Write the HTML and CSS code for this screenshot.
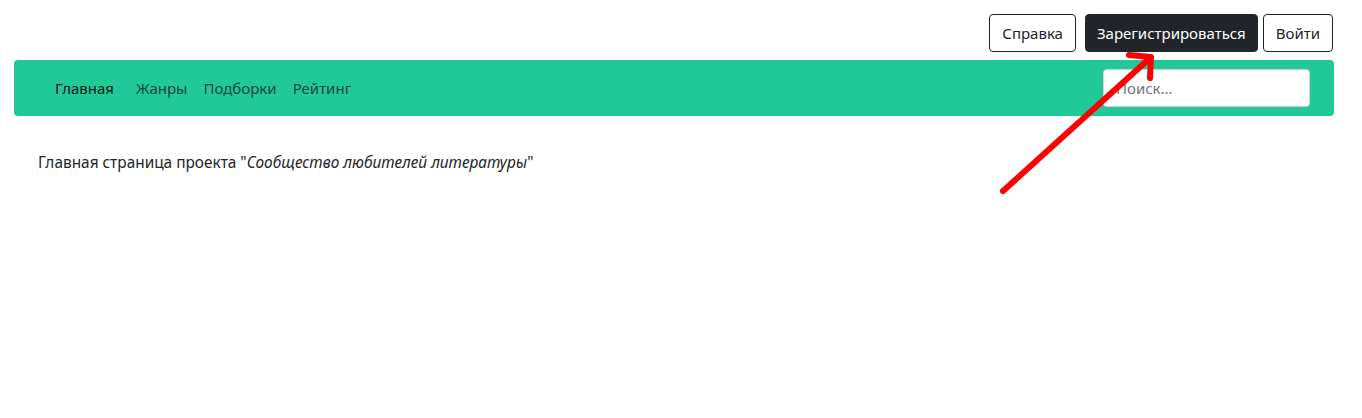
FILE: index.html
```html
<!DOCTYPE html>
<html lang="ru">
<head>
<meta charset="utf-8">
<link rel="stylesheet" href="styles.css">
</head>
<body>
<div class="page">
  <div class="topbar">
    <button class="btn btn-outline">Справка</button>
    <button class="btn btn-dark">Зарегистрироваться</button>
    <button class="btn btn-outline">Войти</button>
  </div>
  <nav class="navbar">
    <ul class="nav">
      <li><a class="nav-link active" href="#">Главная</a></li>
      <li><a class="nav-link" href="#">Жанры</a></li>
      <li><a class="nav-link" href="#">Подборки</a></li>
      <li><a class="nav-link" href="#">Рейтинг</a></li>
    </ul>
    <input class="search" type="text" placeholder="Поиск...">
  </nav>
  <p class="intro">Главная страница проекта "<em>Сообщество любителей литературы</em>"</p>
</div>
<svg class="arrow" width="1362" height="418" viewBox="0 0 1362 418">
  <g stroke="#ff0000" stroke-width="6" stroke-linecap="round" stroke-linejoin="round" fill="none">
    <line x1="1003" y1="191" x2="1150" y2="58"/>
    <polyline points="1129,55 1151,57 1150,78"/>
  </g>
</svg>
</body>
</html>
```
FILE: styles.css
```css
html, body {
  margin: 0;
  padding: 0;
  background: #fff;
  height: 100%;
}
body {
  font-family: "Noto Sans", "Open Sans", sans-serif;
  color: #212529;
  font-size: 16px;
  position: relative;
  overflow: hidden;
}
.page {
  padding: 14px 28px 0 14px;
}
.topbar {
  display: flex;
  justify-content: flex-end;
  gap: 5px;
  height: 38px;
  margin-right: 1px;
}
.btn {
  font-family: inherit;
  font-size: 15px;
  height: 38px;
  padding: 0 12px;
  border-radius: 4px;
  border: 1px solid #212529;
  cursor: pointer;
  line-height: 1;
}
.btn-outline {
  background: #fff;
  color: #212529;
}
.btn-dark {
  background: #212529;
  color: #fff;
  margin-left: 4px;
  padding: 0 11px;
}
.navbar {
  margin-top: 8px;
  height: 56px;
  background: #20c997;
  border-radius: 4px;
  display: flex;
  align-items: center;
  justify-content: space-between;
  padding: 0 24px 0 33px;
}
.nav {
  list-style: none;
  margin: 0;
  padding: 0;
  display: flex;
}
.nav-link {
  display: block;
  padding: 8px;
  font-size: 15px;
  text-decoration: none;
  color: rgba(0, 0, 0, 0.68);
}
.nav-link.active {
  color: rgba(0, 0, 0, 0.9);
  margin-right: 6px;
}
.search {
  width: 207px;
  height: 38px;
  box-sizing: border-box;
  border: 1px solid #ced4da;
  border-radius: 4px;
  padding: 0 12px;
  font-family: inherit;
  font-size: 15px;
  color: #212529;
  background: #fff;
}
.search::placeholder {
  color: #6c757d;
}
.intro {
  margin: 36px 0 0 24px;
  font-size: 15.4px;
}
.arrow {
  position: absolute;
  left: 0;
  top: 0;
  pointer-events: none;
}
```
